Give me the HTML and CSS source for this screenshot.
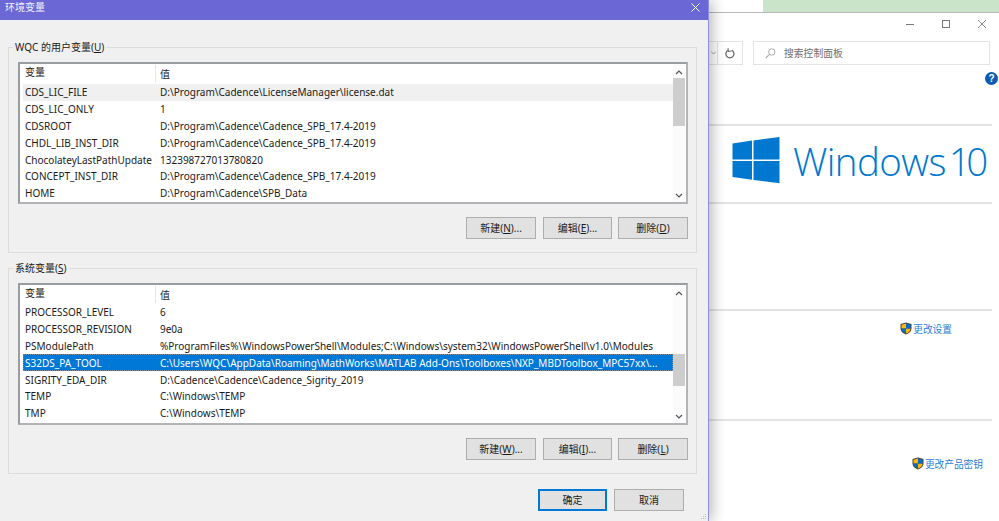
FILE: index.html
```html
<!DOCTYPE html>
<html lang="zh-CN">
<head>
<meta charset="utf-8">
<title>环境变量</title>
<link rel="stylesheet" href="styles.css">
</head>
<body>
<div class="desktop">
  <div class="strip"><div class="strip-white"></div><div class="strip-green"></div></div>
  <div class="cp">
    <div class="cp-controls">
      <svg class="ctl" width="10" height="10" viewBox="0 0 10 10"><path d="M1 5.500h8" stroke="#777" fill="none"/></svg>
      <svg class="ctl" width="10" height="10" viewBox="0 0 10 10"><rect x="1.500" y="1.500" width="7" height="7" stroke="#777" fill="none"/></svg>
      <svg class="ctl" width="10" height="10" viewBox="0 0 10 10"><path d="M1 1l8 8M9 1l-8 8" stroke="#888" fill="none"/></svg>
    </div>
    <div class="cp-toolbar">
      <div class="addr-end"><svg width="5" height="4" viewBox="0 0 5 4"><path d="M0 .5l2.500 2.500 2.500-2.500" stroke="#999" fill="none"/></svg></div>
      <div class="refresh"><svg width="10" height="11" viewBox="0 0 10 11"><path d="M6.800 2.300A4 4 0 1 1 3 2.300" stroke="#666" stroke-width="1.200" fill="none"/><path d="M3.200.2v3.400h3.200" stroke="#666" fill="none" transform="rotate(-8 3 2)"/></svg></div>
      <div class="search">
        <svg width="11" height="11" viewBox="0 0 11 11"><circle cx="6.800" cy="4" r="3.200" stroke="#aaa" fill="none"/><path d="M4.500 6.400L.8 10" stroke="#b9a9b0" stroke-width="1.200" fill="none"/></svg>
        <span>搜索控制面板</span>
      </div>
    </div>
    <div class="help-row"><span class="help">?</span></div>
    <div class="sec sec-logo">
      <svg class="logo" width="48" height="47" viewBox="0 0 48 47"><path fill="#0078d0" d="M.5 6.400L20 3.600v19H.5zM21.500 3.400L47.500 0v22.600h-26zM.5 24.100H20v18.700L.5 40zM21.500 24.100h26V46.300l-26-3.300z"/></svg>
      <span class="win-word">Windows</span><span class="win-num">10</span>
    </div>
    <div class="sec sec-empty"></div>
    <div class="sec sec-settings">
      <a class="link"><svg class="shield" width="12" height="13" viewBox="0 0 12 13"><path d="M6 .5L11.500 2v4.500C11.500 9.500 9 11.500 6 12.500 3 11.500.5 9.500.5 6.500V2z" fill="#444"/><path d="M6 1.500v5H1.500V2.700zM6 6.500h4.500C10.500 9 8.500 10.700 6 11.500z" fill="#ffb900"/><path d="M6 1.500l4.500 1.200v3.800H6zM6 6.500v5C3.500 10.700 1.500 9 1.500 6.500z" fill="#0a6cc4"/></svg>更改设置</a>
    </div>
    <div class="sec sec-key">
      <a class="link"><svg class="shield" width="12" height="13" viewBox="0 0 12 13"><path d="M6 .5L11.500 2v4.500C11.500 9.500 9 11.500 6 12.500 3 11.500.5 9.500.5 6.500V2z" fill="#444"/><path d="M6 1.500v5H1.500V2.700zM6 6.500h4.500C10.500 9 8.500 10.700 6 11.500z" fill="#ffb900"/><path d="M6 1.500l4.500 1.200v3.800H6zM6 6.500v5C3.500 10.700 1.500 9 1.500 6.500z" fill="#0a6cc4"/></svg>更改产品密钥</a>
    </div>
  </div>

  <div class="dialog">
    <div class="titlebar">
      <span class="title-text">环境变量</span>
      <svg width="9" height="9" viewBox="0 0 9 9"><path d="M.5.5l8 8M8.500.5l-8 8" stroke="#fff" fill="none"/></svg>
    </div>
    <div class="body">
      <section class="group">
        <span class="legend">WQC 的用户变量(<u>U</u>)</span>
        <div class="list">
          <div class="table">
            <div class="row head"><span class="c1">变量</span><span class="c2">值</span></div>
            <div class="row hover"><span class="c1">CDS_LIC_FILE</span><span class="c2">D:\Program\Cadence\LicenseManager\license.dat</span></div>
            <div class="row"><span class="c1">CDS_LIC_ONLY</span><span class="c2">1</span></div>
            <div class="row"><span class="c1">CDSROOT</span><span class="c2">D:\Program\Cadence\Cadence_SPB_17.4-2019</span></div>
            <div class="row"><span class="c1">CHDL_LIB_INST_DIR</span><span class="c2">D:\Program\Cadence\Cadence_SPB_17.4-2019</span></div>
            <div class="row"><span class="c1">ChocolateyLastPathUpdate</span><span class="c2">132398727013780820</span></div>
            <div class="row"><span class="c1">CONCEPT_INST_DIR</span><span class="c2">D:\Program\Cadence\Cadence_SPB_17.4-2019</span></div>
            <div class="row"><span class="c1">HOME</span><span class="c2">D:\Program\Cadence\SPB_Data</span></div>
          </div>
          <div class="scrollbar">
            <svg class="arrow" width="8" height="5" viewBox="0 0 8 5"><path d="M1 4l3-3 3 3" stroke="#555" stroke-width="1.200" fill="none"/></svg>
            <div class="track"><div class="thumb thumb-user"></div></div>
            <svg class="arrow" width="8" height="5" viewBox="0 0 8 5"><path d="M1 1l3 3 3-3" stroke="#555" stroke-width="1.200" fill="none"/></svg>
          </div>
        </div>
        <div class="buttons">
          <button class="btn wide">新建(<u>N</u>)...</button>
          <button class="btn">编辑(<u>E</u>)...</button>
          <button class="btn wide">删除(<u>D</u>)</button>
        </div>
      </section>

      <section class="group">
        <span class="legend">系统变量(<u>S</u>)</span>
        <div class="list list-sys">
          <div class="table">
            <div class="row head"><span class="c1">变量</span><span class="c2">值</span></div>
            <div class="row"><span class="c1">PROCESSOR_LEVEL</span><span class="c2">6</span></div>
            <div class="row"><span class="c1">PROCESSOR_REVISION</span><span class="c2">9e0a</span></div>
            <div class="row"><span class="c1">PSModulePath</span><span class="c2">%ProgramFiles%\WindowsPowerShell\Modules;C:\Windows\system32\WindowsPowerShell\v1.0\Modules</span></div>
            <div class="row selected"><span class="c1">S32DS_PA_TOOL</span><span class="c2">C:\Users\WQC\AppData\Roaming\MathWorks\MATLAB Add-Ons\Toolboxes\NXP_MBDToolbox_MPC57xx\...</span></div>
            <div class="row"><span class="c1">SIGRITY_EDA_DIR</span><span class="c2">D:\Cadence\Cadence\Cadence_Sigrity_2019</span></div>
            <div class="row"><span class="c1">TEMP</span><span class="c2">C:\Windows\TEMP</span></div>
            <div class="row"><span class="c1">TMP</span><span class="c2">C:\Windows\TEMP</span></div>
          </div>
          <div class="scrollbar">
            <svg class="arrow" width="8" height="5" viewBox="0 0 8 5"><path d="M1 4l3-3 3 3" stroke="#555" stroke-width="1.200" fill="none"/></svg>
            <div class="track"><div class="thumb thumb-sys"></div></div>
            <svg class="arrow" width="8" height="5" viewBox="0 0 8 5"><path d="M1 1l3 3 3-3" stroke="#555" stroke-width="1.200" fill="none"/></svg>
          </div>
        </div>
        <div class="buttons">
          <button class="btn wide">新建(<u>W</u>)...</button>
          <button class="btn">编辑(<u>I</u>)...</button>
          <button class="btn wide">删除(<u>L</u>)</button>
        </div>
      </section>

      <div class="footer">
        <button class="btn primary">确定</button>
        <button class="btn wide">取消</button>
      </div>
    </div>
    <svg class="grip" width="6" height="6" viewBox="0 0 6 6"><path d="M4 0h1v1H4zM4 2h1v1H4zM2 2h1v1H2zM4 4h1v1H4zM2 4h1v1H2zM0 4h1v1H0z" fill="#bbb"/></svg>
  </div>
</div>
</body>
</html>
```

FILE: styles.css
```css
* { box-sizing: border-box; }
html, body { margin: 0; padding: 0; }
body {
  width: 999px;
  height: 521px;
  overflow: hidden;
  background: #fff;
  font-family: "Noto Sans", "Noto Sans CJK SC", sans-serif;
  font-size: 10px;
  color: #1a1a1a;
}
.desktop { position: relative; width: 999px; height: 521px; overflow: hidden; }

.strip { display: flex; height: 12px; }
.strip-white { width: 763px; background: #fff; }
.strip-green { flex: 1; background: #c9e4c8; }

.cp {
  margin-left: 709px;
  height: 509px;
  border-top: 1px solid #b9b9b9;
  padding-right: 7px;
  background: #fff;
  display: flex;
  flex-direction: column;
}
.cp-controls {
  height: 28px;
  display: flex;
  justify-content: flex-end;
  padding: 6px 0 0;
  gap: 26px;
  margin-right: 5px;
}
.ctl { flex: none; }
.cp-toolbar { height: 24px; display: flex; align-items: stretch; margin-right: 2px; }
.addr-end {
  width: 9px;
  border: 1px solid #e3e3e3;
  border-left: 0;
  display: flex;
  align-items: center;
  justify-content: center;
}
.refresh {
  width: 25px;
  border: 1px solid #e3e3e3;
  border-left: 0;
  display: flex;
  align-items: center;
  justify-content: center;
}
.search {
  flex: 1;
  margin-left: 10px;
  border: 1px solid #e3e3e3;
  display: flex;
  align-items: center;
  gap: 8px;
  padding-left: 11px;
  color: #6d6d6d;
  font-size: 9.800px;
}
.help-row { height: 59px; display: flex; justify-content: flex-end; padding-top: 7px; margin-right: -6px; }
.help {
  width: 13px;
  height: 13px;
  border-radius: 50%;
  background: #0b5cb0;
  color: #fff;
  font: bold 10px/13px "Liberation Sans", sans-serif;
  text-align: center;
}
.sec { border-top: 2px solid #e3e3e3; }
.sec-logo { height: 78px; display: flex; align-items: flex-start; padding: 11px 0 0 23px; color: #0078d0; }
.logo { flex: none; }
.win-word { margin-left: 13px; margin-top: -2px; font: 300 38.500px/52px "Open Sans", sans-serif; letter-spacing: -.6px; }
.win-num { margin-left: 3px; margin-top: -2px; font: 300 38.500px/52px "Open Sans", sans-serif; letter-spacing: -4.500px; }
.sec-empty { height: 107px; }
.sec-settings { height: 110px; display: flex; justify-content: flex-end; padding: 10px 40px 0 0; }
.sec-key { flex: 1; display: flex; justify-content: flex-end; padding: 35px 9px 0 0; }
.link {
  height: 15px;
  display: flex;
  align-items: center;
  gap: 1px;
  color: #2a80d8;
  font-size: 9.700px;
}
.shield { flex: none; }

.dialog {
  position: absolute;
  left: 0;
  top: 0;
  width: 709px;
  height: 521px;
  background: #f0f0f0;
  border-right: 1px solid #8f8de0;
  box-shadow: 2px 0 14px rgba(0, 0, 0, .32);
}
.titlebar {
  height: 20px;
  background: #6b68d6;
  color: #f2f2fa;
  display: flex;
  align-items: center;
  justify-content: space-between;
  padding: 0 8px 6px 5px;
  font-size: 10px;
}
.title-text { line-height: 14px; }
.body { padding: 27px 11px 0 8px; display: flex; flex-direction: column; gap: 15px; }
.group {
  position: relative;
  height: 206px;
  border: 1px solid #dcdcdc;
  padding: 14px 8px 0 9px;
}
.legend {
  position: absolute;
  left: 4px;
  top: -8px;
  padding: 0 2px;
  background: #f0f0f0;
  line-height: 14px;
  font-size: 10px;
}
.list {
  height: 142px;
  display: flex;
  background: #fff;
  border: 2px solid #b2b4b7;
  border-top-color: #9a9da0;
  border-left-color: #9a9da0;
  padding: 0 1px 0 3px;
}
.table { flex: 1; min-width: 0; }
.row {
  height: 16.800px;
  display: flex;
  align-items: center;
  white-space: nowrap;
  line-height: 14px;
}
.row.head { height: 19px; margin-bottom: 1px; }
.list-sys .row.head { margin-bottom: 0; }
.row.head .c1 { border-right: 1px solid #e5e5e5; height: 17px; }
.row.hover { background: #f0f0f0; }
.row.selected { background: #0078d7; color: #fff; outline: 1px dotted #7f8a96; outline-offset: -1px; }
.c1 { width: 133px; padding-left: 2px; flex: none; }
.c2 { padding-left: 4px; flex: 1; overflow: hidden; }
.scrollbar {
  width: 12px;
  background: #fbfbfb;
  display: flex;
  flex-direction: column;
  align-items: center;
  justify-content: space-between;
  padding: 6px 0 4px;
}
.arrow { flex: none; }
.track { flex: 1; width: 12px; position: relative; }
.thumb { position: absolute; left: 0; width: 12px; background: #cdcdcd; }
.thumb-user { top: 3px; height: 48px; }
.thumb-sys { top: 58px; height: 32px; }
.buttons { display: flex; justify-content: flex-end; gap: 6px; margin-top: 13px; }
.buttons .btn:first-child { margin-right: 1px; }
.btn {
  width: 69px;
  height: 22px;
  padding: 0;
  background: #e1e1e1;
  border: 1px solid #adadad;
  font: inherit;
  color: inherit;
  line-height: 18px;
}
.btn.wide { width: 70px; }
.btn.primary { border: 2px solid #0078d7; }
.footer { display: flex; justify-content: flex-end; gap: 7px; padding-right: 13px; }
.grip { position: absolute; right: 1px; bottom: 1px; }
```
